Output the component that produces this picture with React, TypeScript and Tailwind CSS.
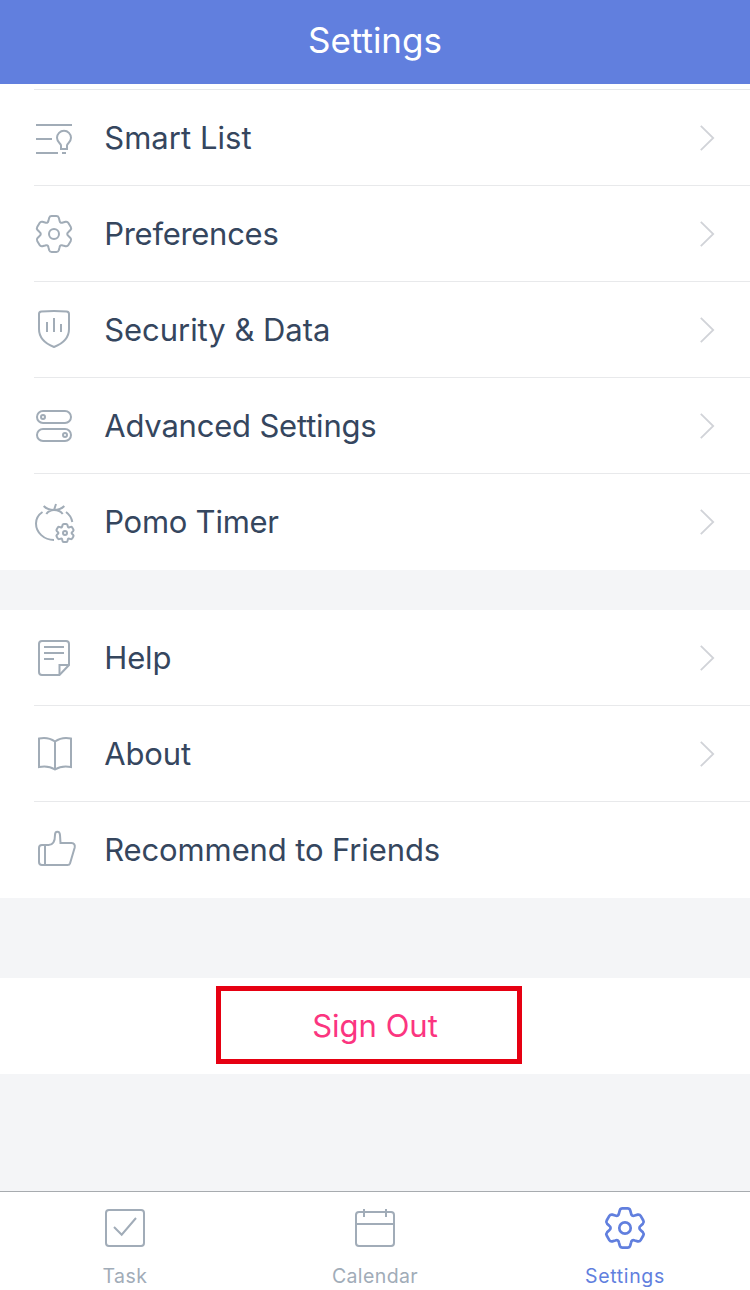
import type { ReactNode } from "react";

// Outline of a six-toothed gear whose teeth reach a radius of about 18 * scale.
function gearPath(cx: number, cy: number, scale: number): string {
  let d = "";
  for (let i = 0; i < 6; i++) {
    const a = (i * Math.PI) / 3;
    const p = (x: number, y: number) => {
      const px = cx + scale * (x * Math.cos(a) - y * Math.sin(a));
      const py = cy + scale * (x * Math.sin(a) + y * Math.cos(a));
      return `${px.toFixed(2)} ${py.toFixed(2)}`;
    };
    d += i === 0 ? `M${p(-5.5, -13.5)}` : "";
    d += `L${p(-4.8, -16.2)}Q${p(-4.2, -18)} ${p(-2.4, -18)}`;
    d += `L${p(2.4, -18)}Q${p(4.2, -18)} ${p(4.8, -16.2)}`;
    d += `L${p(5.5, -13.5)}Q${p(6, -10.4)} ${p(8.94, -11.5)}`;
  }
  return d + "Z";
}

function Icon({ children, width = 2 }: { children: ReactNode; width?: number }) {
  return (
    <svg viewBox="0 0 48 48" className="size-12 shrink-0" fill="none" stroke="currentColor" strokeWidth={width}>
      {children}
    </svg>
  );
}

const SmartListIcon = () => (
  <Icon>
    <path d="M6 11H42M6 25H22M6 39H28M32 39H36" />
    <path d="M31 35V31.5C31 29.5 27 28.5 27 23.8A7 7 0 0 1 41 23.8C41 28.5 37 29.5 37 31.5V35Z" />
  </Icon>
);

const GearIcon = () => (
  <Icon>
    <path d={gearPath(24, 24, 1)} />
    <circle cx="24" cy="24" r="5" />
  </Icon>
);

const ShieldIcon = () => (
  <Icon>
    <path d="M9 8Q9 5.800 11.500 5.500Q24 4.300 36.500 5.500Q39 5.800 39 8V23C39 32 33 37.500 24 41C15 37.500 9 32 9 23Z" />
    <path d="M17 16V26M24 12V26M31 18V26" />
  </Icon>
);

const TogglesIcon = () => (
  <Icon>
    <rect x="7" y="9" width="34" height="12" rx="6" />
    <circle cx="13" cy="15" r="2" />
    <rect x="7" y="27" width="34" height="12" rx="6" />
    <circle cx="35" cy="33" r="2" />
  </Icon>
);

const PomoIcon = () => (
  <Icon>
    <path d="M12.500 14C8 17 6 21 6 25.500C6 34.500 14 42 24 42" />
    <path d="M36 14C39.500 16.500 41.500 19.500 42.300 24" />
    <path d="M13.700 8C16 10.500 19.500 12 24 12S32 10.500 34.300 8M26 6L24 12M16.300 16C18 13.500 21 12 24 12S31 13.500 32.700 16" />
    <path d={gearPath(35, 35, 0.5)} />
    <circle cx="35" cy="35" r="2" />
  </Icon>
);

const NoteIcon = () => (
  <Icon>
    <path d="M12 7H36Q39 7 39 10V31L29.500 41H12Q9 41 9 38V10Q9 7 12 7Z" />
    <path d="M29.500 41V31H39M14 13H34M14 19H34M14 25H24" />
  </Icon>
);

const BookIcon = () => (
  <Icon>
    <path d="M25 11.500Q18 6.500 9 8.500V37Q18 35 25 39.500Q32 35 41 37V8.500Q32 6.500 25 11.500ZV39.500" />
  </Icon>
);

const ThumbIcon = () => (
  <Icon>
    <path d="M15 19H12Q9 19 9 22V36Q9 39 12 39H37.500Q39.500 39 40 37.500L44.700 21.500Q45.500 17.500 41.500 17H30.500L30 9C29.700 4.500 25 4.500 25 9C25 15.500 23.500 19 18.500 19H15V39" />
  </Icon>
);

const Chevron = () => (
  <svg viewBox="0 0 16 28" className="h-7 w-4 text-[#d1d3d8]" fill="none" stroke="currentColor" strokeWidth="1.800">
    <path d="M1.800 1.800L14.200 14L1.800 26.200" />
  </svg>
);

type RowProps = { icon: ReactNode; label: string; spacing: string; divider?: boolean; link?: boolean };

function Row({ icon, label, spacing, divider = true, link = true }: RowProps) {
  return (
    <li className="relative flex h-24 items-center pr-[35px] pl-[30px] text-[#a1acb7]">
      {icon}
      <span className={`ml-[26.200px] flex-1 text-[31px] leading-10 text-[#35465e] ${spacing}`}>{label}</span>
      {link && <Chevron />}
      {divider && <span className="absolute right-0 bottom-0 left-[34px] h-px bg-[#e8e9eb]" />}
    </li>
  );
}

function Tab({ label, color, spacing, children }: { label: string; color: string; spacing: string; children: ReactNode }) {
  return (
    <button className={`flex flex-1 flex-col items-center pt-3 ${color}`}>
      {children}
      <span className={`mt-3 text-[19.500px] leading-6 ${spacing}`}>{label}</span>
    </button>
  );
}

export default function App() {
  return (
    <div className="flex h-[1290px] w-[750px] flex-col overflow-hidden bg-[#f4f5f7] font-['Inter',sans-serif]">
      <header className="flex h-[84px] shrink-0 items-center justify-center bg-[#617fde] pb-1 text-white">
        <h1 className="text-[35px] leading-10 tracking-[0px]">Settings</h1>
      </header>

      <main className="flex-1">
        <section className="bg-white">
          <div className="flex h-1.5 items-end pl-[34px]">
            <div className="h-px flex-1 bg-[#e8e9eb]" />
          </div>
          <ul>
            <Row icon={<SmartListIcon />} label="Smart List" spacing="tracking-[0.050px]" />
            <Row icon={<GearIcon />} label="Preferences" spacing="tracking-[-0.280px]" />
            <Row icon={<ShieldIcon />} label="Security & Data" spacing="tracking-[-0.040px]" />
            <Row icon={<TogglesIcon />} label="Advanced Settings" spacing="tracking-[-0.200px]" />
            <Row icon={<PomoIcon />} label="Pomo Timer" spacing="tracking-[-0.250px]" divider={false} />
          </ul>
        </section>

        <section className="mt-10 bg-white">
          <ul>
            <Row icon={<NoteIcon />} label="Help" spacing="tracking-[-0.100px]" />
            <Row icon={<BookIcon />} label="About" spacing="tracking-[-0.150px]" />
            <Row icon={<ThumbIcon />} label="Recommend to Friends" spacing="tracking-[-0.120px]" divider={false} link={false} />
          </ul>
        </section>

        <section className="relative mt-20 flex h-24 items-center justify-center bg-white">
          <button className="text-[31px] leading-10 text-[#fb3580]">Sign Out</button>
          <span className="pointer-events-none absolute top-2 left-[216px] h-[78px] w-[306px] border-5 border-[#e60012]" />
        </section>
      </main>

      <nav className="flex h-[99px] shrink-0 border-t border-[#a7abaf] bg-white">
        <Tab label="Task" color="text-[#a1acb8]" spacing="tracking-[0.500px]">
          <Icon>
            <rect x="5" y="6" width="38" height="36" rx="3" />
            <path d="M13 23L20.700 30.700L35 14" />
          </Icon>
        </Tab>
        <Tab label="Calendar" color="text-[#a1acb8]" spacing="tracking-[0.400px]">
          <Icon>
            <rect x="5" y="8" width="38" height="34" rx="3" />
            <path d="M5 20H43M13 5V13M35 5V13" />
          </Icon>
        </Tab>
        <Tab label="Settings" color="text-[#617fde]" spacing="tracking-[0.650px]">
          <Icon width={2.7}>
            <path d={gearPath(24, 24, 1.09)} />
            <circle cx="24" cy="24" r="5.700" />
          </Icon>
        </Tab>
      </nav>
    </div>
  );
}
